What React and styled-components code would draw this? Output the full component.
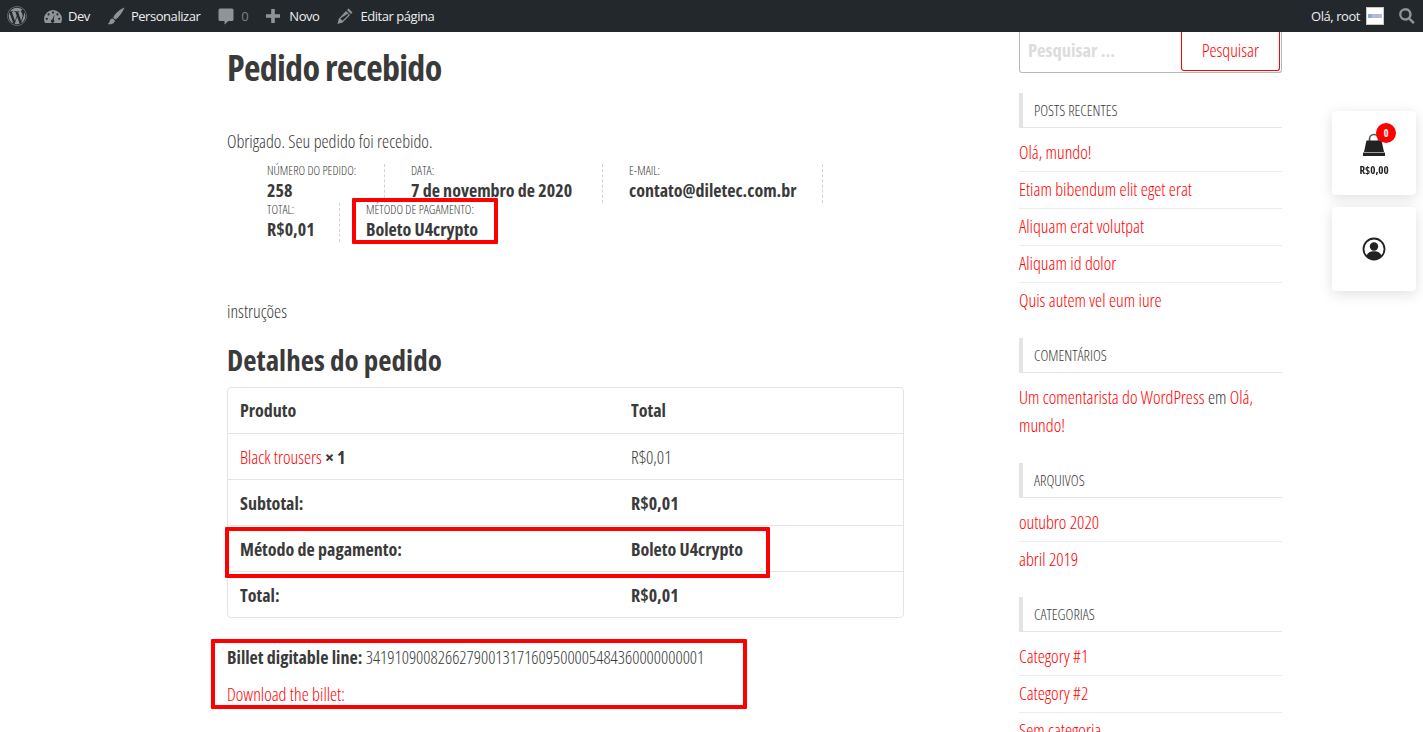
import React from "react";
import styled, { createGlobalStyle } from "styled-components";
import { FaWordpress } from "react-icons/fa";

const GlobalStyle = createGlobalStyle`
  html, body { margin: 0; padding: 0; height: 732px; overflow: hidden; background: #fff; }
  body { font-family: "Open Sans", "Liberation Sans", sans-serif; font-stretch: 75%; color: #3a3a3a; }
  * { box-sizing: border-box; }
  a { color: #ff0000; text-decoration: none; }
`;

const AdminBar = styled.header`
  height: 32px;
  background: #23282d;
  display: flex;
  justify-content: space-between;
  align-items: center;
  padding: 0 8px 0 7px;
  font-family: "Open Sans", sans-serif;
  font-stretch: 100%;
  font-size: 13px;
  letter-spacing: -0.45px;
  color: #eee;
`;
const BarGroup = styled.div`
  display: flex;
  align-items: center;
`;
const BarItem = styled.span`
  display: flex;
  align-items: center;
  gap: ${(p) => p.$gap || 5}px;
  margin-right: ${(p) => p.$mr || 0}px;
  color: ${(p) => (p.$dim ? "#7d8286" : "#eee")};
  svg { display: block; fill: #8f9498; }
`;
const Avatar = styled.span`
  width: 18px;
  height: 18px;
  margin: 0 15px 0 6px;
  background: #fff;
  border: 1px solid #c9c9c9;
  display: flex;
  align-items: center;
  justify-content: center;
  overflow: hidden;
`;
const AvatarMark = styled.i`
  display: block;
  width: 14px;
  height: 4px;
  background: linear-gradient(90deg, #7fb3cf 0 25%, #b7b9d0 25% 100%);
`;

const Page = styled.div`
  display: flex;
  align-items: flex-start;
  padding-left: 227px;
  height: 700px;
  overflow: hidden;
`;
const Main = styled.main`
  position: relative;
  width: 677px;
  margin-right: 115px;
  flex: none;
`;
const PageTitle = styled.h1`
  margin: 12px 0 0;
  font-size: 36px;
  line-height: 48px;
  font-weight: 700;
  letter-spacing: -0.7px;
`;
const Thanks = styled.p`
  margin: 37px 0 0;
  font-size: 18px;
  line-height: 24px;
  font-weight: 300;
`;
const Overview = styled.ul`
  list-style: none;
  margin: 11px 0 0;
  padding: 0 0 0 40px;
  display: flex;
  flex-wrap: wrap;
  width: 640px;
`;
const OverviewItem = styled.li`
  height: 39px;
  padding-right: 26px;
  margin-right: 26px;
  border-right: 1px dashed #d3d3d3;
  font-size: 12.5px;
  line-height: 14px;
  font-weight: 300;
  text-transform: uppercase;
  white-space: nowrap;
  flex: none;
  width: ${(p) => p.$w}px;
  &:last-child { border-right: 0; }
  strong {
    display: block;
    font-size: 18px;
    line-height: 24px;
    font-weight: 700;
    text-transform: none;
    white-space: nowrap;
  }
`;
const Instructions = styled.p`
  margin: 57px 0 0;
  font-size: 18px;
  line-height: 24px;
  font-weight: 300;
`;
const SectionTitle = styled.h2`
  margin: 17px 0 0;
  font-size: 29px;
  line-height: 40px;
  font-weight: 700;
`;
const OrderTable = styled.div`
  margin-top: 7px;
  border: 1px solid #e4e4e4;
  border-radius: 4px;
`;
const Row = styled.div`
  display: grid;
  grid-template-columns: 391px 1fr;
  height: 46px;
  align-items: center;
  padding: 0 12px;
  font-size: 18px;
  font-weight: ${(p) => (p.$light ? 300 : 700)};
  border-top: ${(p) => (p.$first ? "0" : "1px solid #e4e4e4")};
  margin-top: ${(p) => (p.$first ? "-1px" : "0")};
`;
const Qty = styled.b`
  font-weight: 700;
`;
const BilletLine = styled.p`
  margin: 27px 0 0;
  font-size: 18px;
  line-height: 24px;
  font-weight: 300;
  strong { font-weight: 700; }
`;
const BilletCode = styled.span`
  font-size: 17.7px;
`;
const BilletLink = styled.p`
  margin: 13px 0 0;
  font-size: 18px;
  line-height: 24px;
  font-weight: 300;
`;
const Highlight = styled.div`
  position: absolute;
  left: ${(p) => p.$l}px;
  top: ${(p) => p.$t}px;
  width: ${(p) => p.$w}px;
  height: ${(p) => p.$h}px;
  border: 4px solid #ff0000;
  border-radius: 1px;
  pointer-events: none;
`;

const Sidebar = styled.aside`
  width: 263px;
  flex: none;
`;
const SearchBox = styled.form`
  display: flex;
  justify-content: space-between;
  height: 41px;
  margin: 0;
  border: 1px solid #b9b9b9;
  border-top: 0;
  border-radius: 0 0 3px 3px;
`;
const SearchInput = styled.span`
  padding: 5px 0 0 8px;
  font-size: 18.5px;
  line-height: 26px;
  font-weight: 700;
  color: #dcdcdc;
`;
const SearchButton = styled.span`
  width: 99px;
  height: 39px;
  margin-right: 1px;
  border: 1px solid #ff0000;
  border-top: 0;
  border-radius: 0 0 3px 3px;
  color: #ff0000;
  font-size: 18px;
  font-weight: 300;
  text-align: center;
  line-height: 37px;
`;
const WidgetTitle = styled.h3`
  margin: ${(p) => p.$mt}px 0 0;
  height: 35px;
  padding-left: 11px;
  border-left: 4px solid #e4e4e4;
  border-bottom: 1px solid #e4e4e4;
  font-size: 15px;
  line-height: 35px;
  font-weight: 300;
  text-transform: uppercase;
`;
const LinkList = styled.ul`
  list-style: none;
  margin: 7px 0 0;
  padding: 0;
`;
const LinkItem = styled.li`
  height: 37px;
  border-bottom: 1px solid #ececec;
  font-size: 18px;
  line-height: 35px;
  font-weight: 300;
  white-space: nowrap;
  &:last-child { border-bottom: 0; }
`;
const Comment = styled.p`
  margin: 10px 0 0;
  font-size: 18px;
  line-height: 28px;
  font-weight: 300;
`;

const FloatColumn = styled.div`
  position: fixed;
  top: 111px;
  left: 1332px;
  display: flex;
  flex-direction: column;
  gap: 12px;
`;
const FloatCard = styled.div`
  position: relative;
  width: 84px;
  height: 84px;
  background: #fff;
  border-radius: 4px;
  box-shadow: 0 3px 14px rgba(0, 0, 0, 0.13);
  display: flex;
  flex-direction: column;
  align-items: center;
  padding-top: ${(p) => p.$pt}px;
`;
const Badge = styled.span`
  position: absolute;
  left: 44px;
  top: 12px;
  width: 20px;
  height: 20px;
  border-radius: 50%;
  background: #ff0000;
  color: #fff;
  font-size: 10px;
  font-weight: 700;
  line-height: 20px;
  text-align: center;
`;
const CardPrice = styled.span`
  margin-top: 6px;
  font-size: 11px;
  line-height: 14px;
  font-weight: 700;
  color: #222;
`;

const Gauge = () => (
  <svg width="20" height="20" viewBox="0 0 20 20">
    <path d="M2 17c-.6-1.200-1-2.600-1-4a9 9 0 0 1 18 0c0 1.400-.4 2.800-1 4zM10 5.500a1.100 1.100 0 1 0 0 2.200 1.100 1.100 0 0 0 0-2.200zM5.600 7.300a1.100 1.100 0 1 0 0 2.200 1.100 1.100 0 0 0 0-2.200zm8.800 0a1.100 1.100 0 1 0 0 2.200 1.100 1.100 0 0 0 0-2.200zM3.800 11.700a1.100 1.100 0 1 0 0 2.200 1.100 1.100 0 0 0 0-2.200zm12.400 0a1.100 1.100 0 1 0 0 2.200 1.100 1.100 0 0 0 0-2.200zM11.400 8.500l-2 4.900a1.700 1.700 0 1 0 1.400.4z" fillRule="evenodd" />
  </svg>
);
const Brush = () => (
  <svg width="20" height="20" viewBox="0 0 20 20">
    <path d="M18.500 1.500C15.500 2.500 10.500 6 8.300 9.500c-.6 1-.9 1.700-1 2.400l2 1.600c.8-.3 1.600-.9 2.500-1.800 3-3 5.800-7.700 6.700-10.200zM6.700 12.500c-1.800.1-2.700 1.300-3 2.500-.3 1.200-.9 2.300-2.200 3 2.600.6 5.500.2 6.800-1.800.5-.7.600-1.400.5-2z" />
  </svg>
);
const Bubble = () => (
  <svg width="20" height="20" viewBox="0 0 20 20">
    <path d="M4 2.500h12A1.500 1.500 0 0 1 17.500 4v9.500A1.500 1.500 0 0 1 16 15h-3.500l-4 3.500V15H4a1.500 1.500 0 0 1-1.500-1.500V4A1.500 1.500 0 0 1 4 2.500z" />
  </svg>
);
const Plus = () => (
  <svg width="20" height="20" viewBox="0 0 20 20">
    <path d="M8.200 3h3.600v5.200H17v3.600h-5.200V17H8.200v-5.200H3V8.200h5.200z" />
  </svg>
);
const Pencil = () => (
  <svg width="20" height="20" viewBox="0 0 20 20">
    <path d="M13.500 2.500 17.500 6.500 16 8 12 4zM11 5l4 4-7.500 7.500-5 1.500 1.300-5.200zM5.300 12.500l2.200 2.200 6-6-.9-.9z" fillRule="evenodd" />
  </svg>
);
const SearchGlass = () => (
  <svg width="16" height="16" viewBox="0 0 16 16">
    <path d="M6.300 0a6.300 6.300 0 0 1 5.100 10l4.400 4.200-1.800 1.800-4.300-4.300A6.300 6.300 0 1 1 6.300 0zm0 2.400a3.900 3.900 0 1 0 0 7.800 3.900 3.900 0 0 0 0-7.800z" fillRule="evenodd" />
  </svg>
);
const Bag = () => (
  <svg width="24" height="24" viewBox="0 0 24 24">
    <path d="M7.500 9V6a4.500 4.500 0 0 1 9 0v3" fill="none" stroke="#555" strokeWidth="1.600" />
    <path d="M4.500 7.500h15L22 19H2z" fill="#222" />
    <path d="M1 19h22v1H1z" fill="#a0a0a0" />
    <path d="M1 20h22v3H1z" fill="#222" />
  </svg>
);
const UserCircle = () => (
  <svg width="24" height="24" viewBox="0 0 24 24">
    <circle cx="12" cy="12" r="10.500" fill="#fff" stroke="#222" strokeWidth="1.800" />
    <circle cx="12" cy="9.500" r="4.200" fill="#222" />
    <path d="M4.500 19c1-3.500 4-4.700 7.500-4.700s6.500 1.200 7.500 4.700a10.500 10.500 0 0 1-15 0z" fill="#222" />
  </svg>
);

const App = () => (
  <>
    <GlobalStyle />
    <AdminBar>
      <BarGroup>
        <BarItem $mr={16}><FaWordpress size={20} /></BarItem>
        <BarItem $mr={16}><Gauge />Dev</BarItem>
        <BarItem $mr={16}><Brush />Personalizar</BarItem>
        <BarItem $mr={15} $dim><Bubble />0</BarItem>
        <BarItem $mr={16} $gap={6}><Plus />Novo</BarItem>
        <BarItem><Pencil />Editar página</BarItem>
      </BarGroup>
      <BarGroup>
        <span>Olá, root</span>
        <Avatar><AvatarMark /></Avatar>
        <BarItem><SearchGlass /></BarItem>
      </BarGroup>
    </AdminBar>
    <Page>
      <Main>
        <PageTitle>Pedido recebido</PageTitle>
        <Thanks>Obrigado. Seu pedido foi recebido.</Thanks>
        <Overview>
          <OverviewItem $w={118}>Número do pedido:<strong>258</strong></OverviewItem>
          <OverviewItem $w={192}>Data:<strong>7 de novembro de 2020</strong></OverviewItem>
          <OverviewItem $w={194}>E-mail:<strong>contato@diletec.com.br</strong></OverviewItem>
          <OverviewItem $w={73}>Total:<strong>R$0,01</strong></OverviewItem>
          <OverviewItem $w={200}>Método de pagamento:<strong>Boleto U4crypto</strong></OverviewItem>
        </Overview>
        <Instructions>instruções</Instructions>
        <SectionTitle>Detalhes do pedido</SectionTitle>
        <OrderTable>
          <Row $first><span>Produto</span><span>Total</span></Row>
          <Row $light><span><a href="#p">Black trousers</a> <Qty>× 1</Qty></span><span>R$0,01</span></Row>
          <Row><span>Subtotal:</span><span>R$0,01</span></Row>
          <Row><span>Método de pagamento:</span><span>Boleto U4crypto</span></Row>
          <Row><span>Total:</span><span>R$0,01</span></Row>
        </OrderTable>
        <BilletLine><strong>Billet digitable line:</strong> <BilletCode>34191090082662790013171609500005484360000000001</BilletCode></BilletLine>
        <BilletLink><a href="#b">Download the billet:</a></BilletLink>
        <Highlight $l={125} $t={166} $w={146} $h={46} />
        <Highlight $l={-2} $t={495} $w={545} $h={51} />
        <Highlight $l={-16} $t={607} $w={536} $h={70} />
      </Main>
      <Sidebar>
        <SearchBox>
          <SearchInput>Pesquisar ...</SearchInput>
          <SearchButton>Pesquisar</SearchButton>
        </SearchBox>
        <WidgetTitle $mt={20}>Posts recentes</WidgetTitle>
        <LinkList>
          <LinkItem><a href="#1">Olá, mundo!</a></LinkItem>
          <LinkItem><a href="#2">Etiam bibendum elit eget erat</a></LinkItem>
          <LinkItem><a href="#3">Aliquam erat volutpat</a></LinkItem>
          <LinkItem><a href="#4">Aliquam id dolor</a></LinkItem>
          <LinkItem><a href="#5">Quis autem vel eum iure</a></LinkItem>
        </LinkList>
        <WidgetTitle $mt={18}>Comentários</WidgetTitle>
        <Comment><a href="#c">Um comentarista do WordPress</a> em <a href="#m">Olá, mundo!</a></Comment>
        <WidgetTitle $mt={24}>Arquivos</WidgetTitle>
        <LinkList>
          <LinkItem><a href="#o">outubro 2020</a></LinkItem>
          <LinkItem><a href="#a">abril 2019</a></LinkItem>
        </LinkList>
        <WidgetTitle $mt={18}>Categorias</WidgetTitle>
        <LinkList>
          <LinkItem><a href="#c1">Category #1</a></LinkItem>
          <LinkItem><a href="#c2">Category #2</a></LinkItem>
          <LinkItem><a href="#s">Sem categoria</a></LinkItem>
        </LinkList>
      </Sidebar>
    </Page>
    <FloatColumn>
      <FloatCard $pt={22}>
        <Bag />
        <Badge>0</Badge>
        <CardPrice>R$0,00</CardPrice>
      </FloatCard>
      <FloatCard $pt={30}><UserCircle /></FloatCard>
    </FloatColumn>
  </>
);

export default App;
